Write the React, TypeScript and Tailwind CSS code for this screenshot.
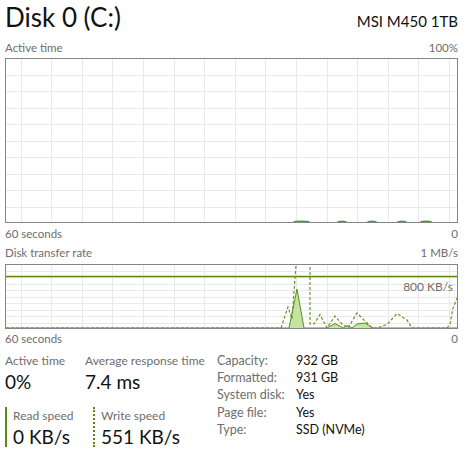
const font = { fontFamily: 'Lato, "Open Sans", sans-serif' };

const vLines = Array.from({ length: 15 }, (_, i) => 20.5 + i * 30.6);

function Grid({ top, bottom, step }: { top: number; bottom: number; step: number }) {
  const rows: number[] = [];
  for (let y = top + step; y < bottom - 1; y += step) rows.push(Math.round(y) + 0.5);
  return (
    <g stroke="#e9e9e9" strokeWidth="1">
      {vLines.map((x) => (
        <line key={"v" + x} x1={Math.round(x) + 0.5} y1={top} x2={Math.round(x) + 0.5} y2={bottom} />
      ))}
      {rows.map((y) => (
        <line key={"h" + y} x1={0} y1={y} x2={469} y2={y} />
      ))}
    </g>
  );
}

function ActiveChart() {
  const bumps = [
    [293, 310],
    [337, 347],
    [367, 377],
    [397, 407],
    [420, 432],
  ];
  return (
    <div className="h-[165px] border border-[#858585] bg-white">
      <svg width="451" height="163" className="block">
        <g transform="translate(-6,-59)">
          <Grid top={58} bottom={223} step={16.5} />
          {bumps.map(([a, b]) => (
            <ellipse key={a} cx={(a + b) / 2} cy={222} rx={(b - a) / 2} ry={1.6} fill="#5a9a14" />
          ))}
        </g>
      </svg>
    </div>
  );
}

function TransferChart() {
  const read =
    "M 6 326 L 289 326 L 297 287 L 304 326 L 327 326 L 335 321.5 L 343 326 L 347 323.5 L 352 326 L 357 322 L 365 321 L 373 326 L 457 326";
  const write =
    "M 6 326 L 281 326 L 288 305 L 292 317 L 297 250 L 310 250 L 310 322 L 314 322 L 320 312.5 L 327 326 L 335 314 L 342 322 L 348 326 L 357 311 L 367 321 L 372 326 L 377 326 L 387 322.5 L 397 311.5 L 407 318 L 412 326 L 447 326 L 450 322 L 453 306 L 458 294";
  return (
    <div className="relative h-[65px] border border-[#858585] bg-white">
      <svg width="451" height="63" className="block">
        <g transform="translate(-6,-263)">
          <Grid top={262} bottom={327} step={6.5} />
          <line x1={0} y1={274.5} x2={469} y2={274.5} stroke="#5a8a12" strokeWidth="1.6" />
          <path d={read} fill="#c4e5a2" stroke="#5f8f1c" strokeWidth="1" strokeLinejoin="round" />
          <path d={write} fill="none" stroke="#5f8a22" strokeWidth="1.1" strokeDasharray="3 2" />
        </g>
      </svg>
      <span className="absolute right-[4px] top-[14px] text-[12px] leading-[16px] text-[#6e6e6e]">800 KB/s</span>
    </div>
  );
}

function Info({ label, value }: { label: string; value: string }) {
  return (
    <div className="flex h-[17.3px] items-center whitespace-nowrap text-[12.5px] leading-[16px]">
      <span className="w-[79px] text-[#6e6e6e]">{label}</span>
      <span className="text-[#111]">{value}</span>
    </div>
  );
}

function Stat({ label, value }: { label: string; value: string }) {
  return (
    <div className="whitespace-nowrap">
      <div className="text-[12px] leading-[17px] text-[#6e6e6e]">{label}</div>
      <div className="text-[19px] leading-[25px] text-[#111]">{value}</div>
    </div>
  );
}

export default function App() {
  return (
    <div className="h-[456px] w-[469px] overflow-hidden bg-white pl-[5px] pr-[11px]" style={font}>
      <div className="flex h-[40px] items-baseline justify-between">
        <span className="text-[26px] leading-[34px] text-[#111]">Disk 0 (C:)</span>
        <span className="text-[15px] leading-[20px] text-[#111]">MSI M450 1TB</span>
      </div>
      <div className="flex h-[18px] items-start justify-between text-[11.5px] leading-[16px] text-[#6e6e6e]">
        <span>Active time</span>
        <span>100%</span>
      </div>
      <ActiveChart />
      <div className="mt-[3px] flex h-[16px] justify-between text-[11.5px] leading-[16px] text-[#6e6e6e]">
        <span>60 seconds</span>
        <span>0</span>
      </div>
      <div className="mt-[3px] flex h-[19px] items-start justify-between text-[11.5px] leading-[16px] text-[#6e6e6e]">
        <span>Disk transfer rate</span>
        <span>1 MB/s</span>
      </div>
      <TransferChart />
      <div className="mt-[2px] flex h-[16px] justify-between text-[11.5px] leading-[16px] text-[#6e6e6e]">
        <span>60 seconds</span>
        <span>0</span>
      </div>
      <div className="mt-[5px] flex">
        <div className="w-[212px]">
          <div className="flex">
            <div className="w-[80px]">
              <Stat label="Active time" value="0%" />
            </div>
            <Stat label="Average response time" value="7.4 ms" />
          </div>
          <div className="mt-[13px] flex">
            <div className="flex h-[40px] w-[88px] gap-[6px]">
              <div className="w-[2px] bg-[#5a8a12]" />
              <Stat label="Read speed" value="0 KB/s" />
            </div>
            <div className="flex h-[40px] gap-[6px]">
              <div className="w-0 border-l-2 border-dotted border-[#5a8a12]" />
              <Stat label="Write speed" value="551 KB/s" />
            </div>
          </div>
        </div>
        <div>
          <Info label="Capacity:" value="932 GB" />
          <Info label="Formatted:" value="931 GB" />
          <Info label="System disk:" value="Yes" />
          <Info label="Page file:" value="Yes" />
          <Info label="Type:" value="SSD (NVMe)" />
        </div>
      </div>
    </div>
  );
}
